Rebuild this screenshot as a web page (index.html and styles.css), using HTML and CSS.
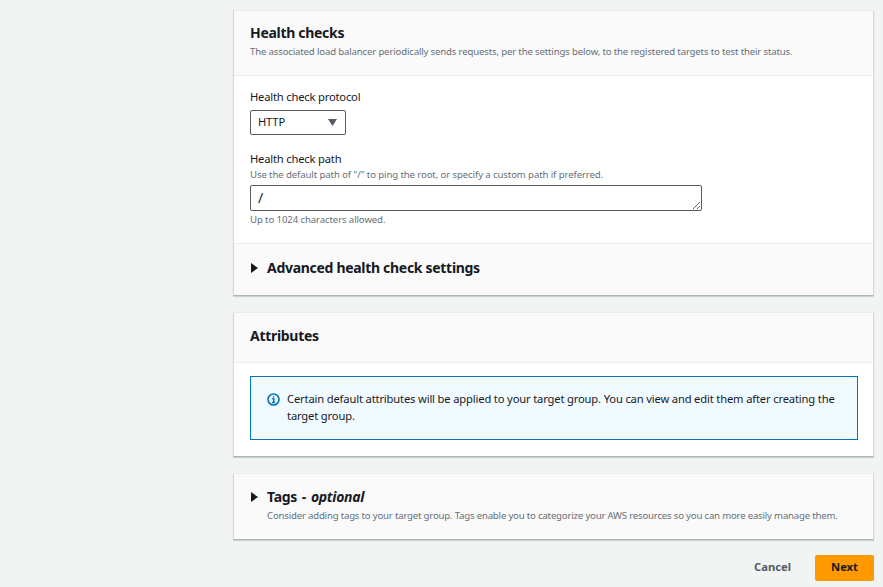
FILE: index.html
```html
<!DOCTYPE html>
<html lang="en">
<head>
<meta charset="utf-8">
<title>Target group</title>
<link rel="stylesheet" href="styles.css">
</head>
<body>
<main class="page">
  <section class="card card-health">
    <header class="card-head head-health">
      <h2 class="title">Health checks</h2>
      <p class="desc">The associated load balancer periodically sends requests, per the settings below, to the registered targets to test their status.</p>
    </header>
    <div class="card-body">
      <label class="label">Health check protocol</label>
      <div class="select">
        <span>HTTP</span>
        <svg class="caret" width="9" height="7" viewBox="0 0 9 7"><path d="M0 0h9L4.5 7z" fill="#545b64"/></svg>
      </div>
      <label class="label label-path">Health check path</label>
      <p class="hint">Use the default path of "/" to ping the root, or specify a custom path if preferred.</p>
      <textarea class="path" rows="1">/</textarea>
      <p class="hint hint-after">Up to 1024 characters allowed.</p>
    </div>
    <div class="expander expander-adv">
      <svg class="tri" width="7" height="10" viewBox="0 0 7 10"><path d="M0 0l7 5-7 5z" fill="#16191f"/></svg>
      <h3 class="exp-title">Advanced health check settings</h3>
    </div>
  </section>

  <section class="card">
    <header class="card-head head-attr">
      <h2 class="title">Attributes</h2>
    </header>
    <div class="attr-body">
      <div class="alert">
        <svg class="info" width="13" height="13" viewBox="0 0 13 13"><circle cx="6.5" cy="6.5" r="5.5" fill="none" stroke="#0073bb" stroke-width="1.6"/><path d="M5.2 5.8h1.6v3.4M5 9.4h3.2M6.5 3.2v1.4" fill="none" stroke="#0073bb" stroke-width="1.5"/></svg>
        <p class="alert-text">Certain default attributes will be applied to your target group. You can view and edit them after creating the target group.</p>
      </div>
    </div>
  </section>

  <section class="card">
    <div class="expander expander-tags">
      <svg class="tri tri-tags" width="7" height="10" viewBox="0 0 7 10"><path d="M0 0l7 5-7 5z" fill="#16191f"/></svg>
      <div>
        <h3 class="exp-title exp-tags">Tags - <em>optional</em></h3>
        <p class="desc desc-tags">Consider adding tags to your target group. Tags enable you to categorize your AWS resources so you can more easily manage them.</p>
      </div>
    </div>
  </section>

  <footer class="actions">
    <button class="btn-link">Cancel</button>
    <button class="btn-primary">Next</button>
  </footer>
</main>
</body>
</html>
```
FILE: styles.css
```css
* { box-sizing: border-box; }
html, body { margin: 0; height: 100%; }
body {
  background: #f2f3f3;
  font-family: "Noto Sans", sans-serif;
  color: #16191f;
  overflow: hidden;
}
.page {
  margin-left: 233px;
  width: 641px;
  padding-top: 10px;
  display: flex;
  flex-direction: column;
  gap: 16px;
}
.card {
  background: #fff;
  border-top: 1px solid #eaeded;
  border-left: 1px solid #d5dbdb;
  border-right: 1px solid #d5dbdb;
  border-bottom: 1px solid #aab7b8;
  box-shadow: 0 1px 1px rgba(0,28,36,.15);
}
.card-head {
  background: #fafafa;
  border-bottom: 1px solid #eaeded;
  padding: 0 16px;
}
.head-health { height: 65px; padding-top: 13px; }
.head-attr { height: 50px; padding-top: 14px; }
.title { margin: 0; font-size: 14px; line-height: 18px; font-weight: 700; letter-spacing: -0.3px; }
.desc { margin: 3px 0 0; font-size: 9.6px; line-height: 14px; color: #687078; letter-spacing: -0.155px; white-space: nowrap; }
.card-body { padding: 13px 16px 16px; }
.label { display: block; font-size: 11.2px; line-height: 16px; letter-spacing: -0.19px; }
.select {
  margin-top: 5px;
  width: 96px;
  height: 25px;
  border: 1px solid #545b64;
  border-radius: 2px;
  display: flex;
  align-items: center;
  justify-content: space-between;
  padding: 0 8px 2px 7px;
  font-size: 11.2px;
  letter-spacing: -0.19px;
}
.caret { margin-top: 2px; }
.label-path { margin-top: 16px; }
.hint { margin: 1px 0 0; font-size: 9.6px; line-height: 14px; color: #687078; letter-spacing: -0.107px; }
.path {
  display: block;
  margin-top: 3px;
  width: 452px;
  height: 26px;
  border: 1px solid #545b64;
  border-radius: 2px;
  padding: 2px 7px;
  font: 14px/20px "Noto Sans", sans-serif;
  color: #16191f;
  outline: none;
}
.hint-after { margin-top: 2px; }
.expander {
  background: #fafafa;
  border-top: 1px solid #eaeded;
  display: flex;
  gap: 10px;
  padding: 0 16px;
}
.tri { margin-left: 1px; margin-right: -1px; }
.expander-adv { height: 52px; align-items: center; padding-bottom: 3px; }
.exp-title { margin: 0; font-size: 14px; line-height: 20px; font-weight: 700; letter-spacing: -0.3px; }
.exp-title em { font-style: italic; }
.exp-tags { word-spacing: 1.5px; }
.expander-tags { height: 65px; padding-top: 13px; border-top: 0; }
.tri-tags { margin-top: 5px; }
.desc-tags { margin-top: 2px; letter-spacing: -0.185px; }
.attr-body { padding: 13px 15px 16px 16px; }
.alert {
  height: 64px;
  border: 1px solid #0073bb;
  background: #f1faff;
  display: flex;
  gap: 7px;
  padding: 13px 16px;
}
.info { flex: none; margin-top: 3px; }
.alert-text { margin: 0; font-size: 11.2px; line-height: 17px; letter-spacing: -0.16px; }
.actions {
  display: flex;
  justify-content: flex-end;
  align-items: center;
  gap: 24px;
  margin-top: -1px;
}
.btn-link, .btn-primary {
  border: 0;
  font: 700 11.2px "Noto Sans", sans-serif;
  height: 26px;
  padding-bottom: 4px;
}
.btn-link { background: none; color: #545b64; padding-left: 0; padding-right: 0; }
.btn-primary { background: #ff9900; color: #16191f; width: 59px; border-radius: 2px; }
```
